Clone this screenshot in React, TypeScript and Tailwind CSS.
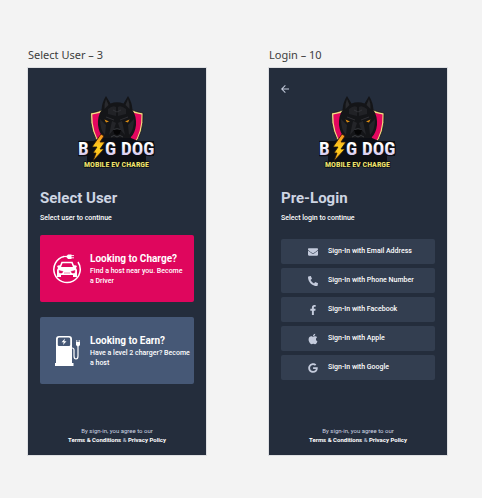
import type { ReactNode } from "react";
import { FaApple, FaEnvelope, FaFacebookF, FaPhoneAlt } from "react-icons/fa";
import { FaGoogle } from "react-icons/fa6";
import { MdArrowBack } from "react-icons/md";

function Logo() {
  return (
    <svg viewBox="0 0 78 74" role="img" aria-label="Big Dog Mobile EV Charge" className="mx-auto h-[74px] w-[78px]">
      <defs>
        <linearGradient id="word" x1="0" y1="0" x2="0" y2="1">
          <stop offset="0.35" stopColor="#ffffff" />
          <stop offset="1" stopColor="#c3afe6" />
        </linearGradient>
        <linearGradient id="bolt" x1="0" y1="0" x2="0" y2="1">
          <stop offset="0" stopColor="#f58a1c" />
          <stop offset="0.5" stopColor="#ffd21e" />
          <stop offset="1" stopColor="#f7a51b" />
        </linearGradient>
      </defs>
      <path d="M12.500 18 Q20 17 26 14 H52 Q58 17 65 18 Q66 38 56 50 H22 Q12 38 12.500 18Z" fill="#f3df83" stroke="#17181e" strokeWidth="0.800" />
      <path d="M14.300 19.500 Q21 19 27 15.500 H51 Q57 19 63.500 19.500 Q64 37 55 50 H23 Q14 37 14.300 19.500Z" fill="#e4075f" />
      <path d="M28 1 L32.500 8.500 Q39 6 45.500 8.500 L50 1 Q54 7 54.500 15 Q58.500 21 58 30 Q57 38 53 42 L51 50 H27 L25 42 Q21 38 20 30 Q19.500 21 23.500 15 Q24 7 28 1Z" fill="#141518" />
      <path d="M28 4 L30.500 10 L26.500 14 Q26 9 28 4Z M50 4 L47.500 10 L51.500 14 Q52 9 50 4Z" fill="#292a2e" />
      <path d="M30 14 Q35 10 38 12 V21 L30 19Z M48 14 Q43 10 40 12 V21 L48 19Z" fill="#212226" />
      <path d="M22 24 L28 30 L27 40 Q22 35 22 24Z M56 24 L50 30 L51 40 Q56 35 56 24Z M34 26 L38 28 L36 34 L31 40Z M44 26 L40 28 L42 34 L47 40Z" fill="#242529" />
      <path d="M28 22 L36 25 M50 22 L42 25 M35 15 L39 17 L43 15" stroke="#393a3f" strokeWidth="0.700" fill="none" />
      <path d="M26.500 24.500 L31 26.500 L28 27.500Z M51.500 24.500 L47 26.500 L50 27.500Z" fill="#dc8c12" />
      <path d="M35 35 Q39 33 43 35 L41.500 39 L39 40 L36.500 39Z" fill="#050506" />
      <path d="M35.500 34.500 Q39 33 42.500 34.500 M33 42 Q36 39 39 42 Q42 39 45 42" stroke="#484a50" strokeWidth="0.700" fill="none" />
      <path d="M2 46 H15 L25 43 L53 43 L60 46 H76 V61 H68 V71 H9 V61 H2Z" fill="#0c0e14" />
      <g fontFamily="'Roboto Condensed', 'Liberation Sans Narrow', 'Liberation Sans', sans-serif" fontWeight="700" stroke="#0c0e14" strokeLinejoin="round" paintOrder="stroke">
        <g fontSize="19" fill="url(#word)" strokeWidth="2.500">
          <text x="0" y="60">B</text>
          <text x="27" y="60">G</text>
          <text x="43" y="60">DOG</text>
        </g>
        <text x="38.500" y="72" fontSize="8" textAnchor="middle" fill="#efe36d" strokeWidth="1.500">MOBILE EV CHARGE</text>
      </g>
      <path d="M23 39 L14 52 L19 52 L15 58 L18 58 L15 66 L26 54 L22 54 L27 47 L22 47 L26 41Z" fill="url(#bolt)" stroke="#2a1708" strokeWidth="0.800" />
    </svg>
  );
}

function CarIcon() {
  return (
    <svg viewBox="0 0 30 31" className="h-[31px] w-[30px] shrink-0" fill="none" aria-hidden="true">
      <path d="M12 3.500 A13.200 13.200 0 1 0 26 9" stroke="white" strokeWidth="1.500" />
      <path d="M11 3.500 H15" stroke="white" strokeWidth="1.200" />
      <path d="M14 3.500 L16 1.500 H19.500 V6 H16Z" fill="white" />
      <path d="M19 2.600 H22 M19 4.800 H22" stroke="white" strokeWidth="0.900" />
      <path d="M8 14.500 L10 9.500 H20 L22 14.500" stroke="white" strokeWidth="1.600" />
      <path d="M5 13 L7.500 12 L8.500 14 H21.500 L22.500 12 L25 13 L24 15 L25 17 V24 H21 V22 H9 V24 H5 V17 L6 15Z" fill="white" />
      <path d="M7 17.500 L11 18.500 L10 20 H7.500Z M23 17.500 L19 18.500 L20 20 H22.500Z M12 20 H18" fill="#df065d" stroke="#df065d" strokeWidth="0.500" />
    </svg>
  );
}

function PumpIcon() {
  return (
    <svg viewBox="0 0 26 32" className="ml-[3px] h-8 w-[26px] shrink-0" fill="none" aria-hidden="true">
      <path fillRule="evenodd" d="M4 1 H14 Q17 1 17 4 V28 H18.500 V31 H0 V28 H1 V4 Q1 1 4 1Z M4 2.500 Q2.800 2.500 2.800 4 V10 Q2.800 11 4 11 H14 Q15.200 11 15.200 10 V4 Q15.200 2.500 14 2.500Z" fill="white" />
      <path d="M10 3.500 L6.500 7.300 H8.700 L8 10 L11.500 6.200 H9.300Z" fill="white" />
      <path d="M17 13 Q19 13 19 15 V21 Q19 24 21 24 Q23 24 23 21 V11" stroke="white" strokeWidth="1.200" />
      <path d="M21 7 H25 V9.500 Q25 11 23 11.500 Q21 11 21 9.500Z" fill="white" />
      <path d="M21.800 5 V7.500 M24.200 5 V7.500" stroke="white" strokeWidth="0.900" />
    </svg>
  );
}

type ScreenProps = {
  label: string;
  title: string;
  subtitle: string;
  back?: boolean;
  children: ReactNode;
};

function Screen({ label, title, subtitle, back, children }: ScreenProps) {
  return (
    <section>
      <h2 className="font-['Noto_Sans',sans-serif] text-[11px] leading-[14px] whitespace-nowrap text-[#3d3d3d]">{label}</h2>
      <div className="mt-[6px] flex min-h-[387px] flex-col bg-[#242d3c] px-3 pb-[11px] outline outline-[#dedfe2]">
        <div className="flex h-[27px] items-end">
          {back && (
            <button type="button" aria-label="Back" className="text-[#c4cbdc]">
              <MdArrowBack className="-ml-[2px] size-3" />
            </button>
          )}
        </div>
        <Logo />
        <h1 className="mt-[19px] text-[15px] leading-5 font-bold text-[#ced5e3]">{title}</h1>
        <p className="mt-[5px] text-[7px] leading-[10px] font-medium text-white">{subtitle}</p>
        {children}
        <p className="mt-auto text-center text-[6px] leading-[9px] text-[#ced5e3]">
          By sign-in, you agree to our
          <br />
          <a href="#terms" className="font-bold text-white">Terms &amp; Conditions</a> &amp;{" "}
          <a href="#privacy" className="font-bold text-white">Privacy Policy</a>
        </p>
      </div>
    </section>
  );
}

const providers = [
  { name: "Email Address", Icon: FaEnvelope, iconClass: "size-[10px]" },
  { name: "Phone Number", Icon: FaPhoneAlt, iconClass: "size-[10px]" },
  { name: "Facebook", Icon: FaFacebookF, iconClass: "size-[10px]" },
  { name: "Apple", Icon: FaApple, iconClass: "size-3" },
  { name: "Google", Icon: FaGoogle, iconClass: "size-[10px]" },
];

export default function App() {
  return (
    <main className="grid min-h-screen grid-cols-2 content-start gap-x-[63px] bg-[#f3f3f3] pt-12 pr-[35px] pb-10 pl-7 font-[Roboto,sans-serif]">
      <Screen label="Select User – 3" title="Select User" subtitle="Select user to continue">
        <div className="mt-3 flex flex-col gap-[15px]">
          <button type="button" className="flex h-[67px] items-center rounded-[2px] bg-[#df065d] pl-3 text-left text-white">
            <span className="flex w-[38px] shrink-0"><CarIcon /></span>
            <span>
              <span className="block text-[10px] leading-[14px] font-bold">Looking to Charge?</span>
              <span className="block text-[7px] leading-[10px] font-medium">Find a host near you. Become<br />a Driver</span>
            </span>
          </button>
          <button type="button" className="flex h-[67px] items-center rounded-[2px] bg-[#465876] pl-3 text-left text-white">
            <span className="flex w-[38px] shrink-0"><PumpIcon /></span>
            <span>
              <span className="block text-[10px] leading-[14px] font-bold">Looking to Earn?</span>
              <span className="block text-[7px] leading-[10px] font-medium">Have a level 2 charger? Become<br />a host</span>
            </span>
          </button>
        </div>
      </Screen>
      <Screen label="Login – 10" title="Pre-Login" subtitle="Select login to continue" back>
        <div className="mt-4 flex flex-col gap-1">
          {providers.map(({ name, Icon, iconClass }) => (
            <button key={name} type="button" className="flex h-[25px] items-center gap-[9px] rounded-[2px] bg-[#333e50] pl-[26px] text-[7px] font-medium text-white">
              <span className="flex w-3 justify-center text-[#c4cbdc]">
                <Icon className={iconClass} />
              </span>
              Sign-In with {name}
            </button>
          ))}
        </div>
      </Screen>
    </main>
  );
}
